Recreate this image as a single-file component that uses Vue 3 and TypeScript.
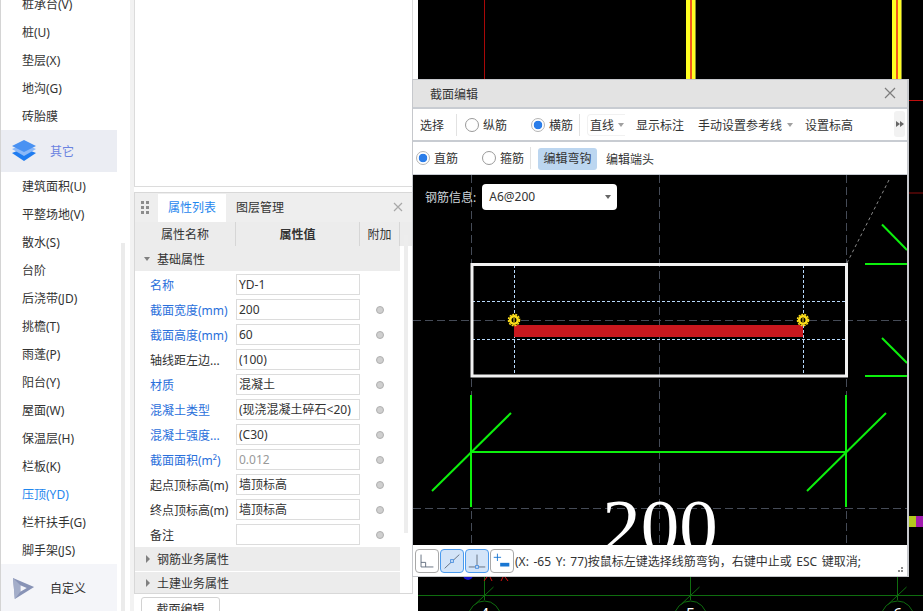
<template>
  <div class="app">
    <aside class="side">
      <ul class="side-list">
        <li
          v-for="item in sideItems"
          :key="item.label"
          :class="['side-item', { 'side-item--cat': item.icon, 'side-item--on': item.on, [`side-item--${item.icon}`]: item.icon }]"
        >
          <svg v-if="item.icon === 'layers'" class="side-icon" viewBox="0 0 24 22">
            <path d="M0 13 L5 11 L12 14 L19 11 L24 13 L12 21 Z" fill="#1f7cf0" />
            <path d="M0 9 L12 4 L24 9 L12 16 Z" fill="#8ab8f8" />
            <path d="M0 6 L12 0 L24 6 L12 12 Z" fill="#4a92f2" />
          </svg>
          <svg v-if="item.icon === 'play'" class="side-icon" viewBox="0 0 24 24">
            <path d="M0 1 L23 11 L2 24 Z M8 9 L8 16 L15 12 Z" fill="#8893b6" fill-rule="evenodd" />
            <path d="M0 1 L8 9 L8 16 L2 24 Z" fill="#a3adc9" />
          </svg>
          <span>{{ item.label }}</span>
        </li>
      </ul>
      <div class="side-thumb"></div>
    </aside>

    <section class="middle">
      <div class="blank-panel"></div>
      <div class="prop-panel">
        <header class="prop-tabs">
          <div class="grip"><i v-for="n in 6" :key="n"></i></div>
          <span class="tab tab--on">属性列表</span>
          <span class="tab">图层管理</span>
          <svg class="prop-close" viewBox="0 0 10 10"><path d="M1 1 L9 9 M9 1 L1 9" /></svg>
        </header>
        <div class="prop-row prop-head">
          <span>属性名称</span>
          <span class="prop-head-val">属性值</span>
          <span>附加</span>
        </div>
        <div class="group group--first"><i class="caret caret--down"></i>基础属性</div>
        <div v-for="row in props" :key="row.name" class="prop-row">
          <span :class="['prop-name', { 'prop-name--blue': row.blue }]">{{ row.name }}</span>
          <span :class="['prop-val', { 'prop-val--dim': row.dim }]">{{ row.value }}</span>
          <span class="prop-extra"><i v-if="row.dot" class="dot"></i></span>
        </div>
        <div class="group group--gap"><i class="caret caret--right"></i>钢筋业务属性</div>
        <div class="group group--last"><i class="caret caret--right"></i>土建业务属性</div>
        <div class="prop-scroll"></div>
      </div>
      <button class="section-btn">截面编辑</button>
    </section>

    <main class="cad">
      <svg class="cad-svg" viewBox="418 0 505 611">
        <line x1="484.5" y1="0" x2="484.5" y2="80" stroke="#a80808" />
        <g v-for="x in [686, 892]" :key="x">
          <rect :x="x" y="0" width="10" height="80" fill="#ffff22" />
          <rect :x="x + 4" y="0" width="2" height="80" fill="#f05a1e" />
          <rect :x="x + 9" y="0" width="1" height="80" fill="#8a8a30" />
        </g>
        <line x1="909" y1="100.5" x2="923" y2="100.5" stroke="#c00e0e" />
        <line x1="909" y1="193" x2="923" y2="193" stroke="#8a0c0c" />
        <rect x="908" y="516" width="8" height="11" fill="#b4c81e" />
        <rect x="916" y="516" width="7" height="11" fill="#a21caf" />
        <g fill="none" stroke="#0f6d0f">
          <line x1="418" y1="595.5" x2="923" y2="595.5" />
          <g v-for="a in axes" :key="a.label">
            <line :x1="a.x" y1="577" :x2="a.x" y2="600" />
            <line :x1="a.x - 9" y1="604" :x2="a.x + 9" y2="587" />
            <circle :cx="a.x" cy="617" r="16" />
            <text :x="a.x" y="620" class="axis-label" stroke="none">{{ a.label }}</text>
          </g>
        </g>
        <circle cx="468" cy="575" r="5" fill="#1414c8" />
        <path d="M487 577 L484 581 M490 577 L492 581 M503 577 L501 581 M505 577 L508 581" stroke="#d01010" fill="none" />
      </svg>
    </main>

    <div class="dialog">
      <div class="dlg-title">
        <span>截面编辑</span>
        <svg class="dlg-close" viewBox="0 0 12 12"><path d="M1 1 L11 11 M11 1 L1 11" /></svg>
      </div>
      <div class="bar bar--top">
        <span class="bar-text">选择</span>
        <i class="sep sep--a"></i>
        <label class="radio radio--first"><i class="radio-dot"></i>纵筋</label>
        <label class="radio radio--next"><i class="radio-dot radio-dot--on"></i>横筋</label>
        <i class="sep sep--b"></i>
        <span class="line-btn">直线<i class="caret caret--down caret--tool"></i></span>
        <span class="bar-text bar-text--mark">显示标注</span>
        <span class="bar-text bar-text--ref">手动设置参考线<i class="caret caret--down caret--ref"></i></span>
        <span class="bar-text bar-text--level">设置标高</span>
        <span class="more-btn"><i></i><i></i></span>
      </div>
      <div class="bar bar--second">
        <label class="radio"><i class="radio-dot radio-dot--on"></i>直筋</label>
        <label class="radio radio--next"><i class="radio-dot"></i>箍筋</label>
        <i class="sep sep--b"></i>
        <span class="edit-btn">编辑弯钩</span>
        <span class="bar-text bar-text--end">编辑端头</span>
      </div>
      <div class="sketch">
        <svg class="sketch-svg" viewBox="413 175 494 370">
          <g fill="none" stroke="#454b57" stroke-dasharray="8 4">
            <line x1="471.5" y1="175" x2="471.5" y2="545" />
            <line x1="659.5" y1="175" x2="659.5" y2="545" />
            <line x1="846.5" y1="175" x2="846.5" y2="545" />
            <line x1="413" y1="320.5" x2="907" y2="320.5" />
            <line x1="413" y1="508.5" x2="907" y2="508.5" />
          </g>
          <line x1="847" y1="263" x2="890" y2="178" stroke="#8a8a8a" stroke-dasharray="3 3" />
          <g stroke="#b8d8fa" stroke-dasharray="3 2" fill="none">
            <line x1="472" y1="301.5" x2="846" y2="301.5" />
            <line x1="472" y1="339.5" x2="846" y2="339.5" />
            <line x1="514.5" y1="265" x2="514.5" y2="376" />
            <line x1="803.5" y1="265" x2="803.5" y2="376" />
          </g>
          <rect x="472" y="264.5" width="374.5" height="111.5" fill="none" stroke="#f2f2f2" stroke-width="3" />
          <rect x="514" y="325" width="289" height="12" fill="#c8171e" />
          <g v-for="x in [514, 803]" :key="x">
            <circle :cx="x" cy="320" r="5.6" fill="none" stroke="#ffe01a" stroke-width="1.4" stroke-dasharray="2 1" />
            <circle :cx="x" cy="320" r="3.8" fill="#000" stroke="#ffe01a" stroke-width="2.6" />
            <rect :x="x - 0.5" y="318" width="1" height="4" fill="#ffe01a" />
          </g>
          <g stroke="#0cf00c" stroke-width="2" fill="none">
            <line x1="471" y1="395" x2="471" y2="507" />
            <line x1="432" y1="491" x2="511" y2="413" />
            <line x1="471" y1="452" x2="846" y2="452" />
            <line x1="846" y1="395" x2="846" y2="507" />
            <line x1="807" y1="491" x2="886" y2="413" />
            <line x1="882" y1="224.5" x2="907" y2="250" />
            <line x1="865" y1="264" x2="907" y2="264" />
            <line x1="882" y1="338" x2="907" y2="363" />
            <line x1="865" y1="376" x2="907" y2="376" />
          </g>
          <text x="660" y="552" class="dim-text">200</text>
        </svg>
        <div class="rebar-info">
          <span>钢筋信息:</span>
          <div class="rebar-select">A6@200<i class="caret caret--down caret--select"></i></div>
        </div>
      </div>
      <div class="status">
        <button class="snap">
          <svg viewBox="0 0 24 24"><path d="M5.5 5 V18.5 H19 M5.5 13.5 H10.5 V18.5" /></svg>
        </button>
        <button class="snap snap--on">
          <svg viewBox="0 0 24 24"><path d="M4 20 L20 5" /><rect x="10.5" y="10.5" width="3" height="3" /></svg>
        </button>
        <button class="snap snap--on">
          <svg viewBox="0 0 24 24"><path d="M3 18.5 H21 M12 5 V17" /><rect x="10.5" y="17" width="3" height="3" /></svg>
        </button>
        <button class="snap">
          <svg viewBox="0 0 24 24">
            <path class="snap-plus" d="M7 4 V12 M3 8 H11" />
            <rect class="snap-minus" x="10" y="14" width="10" height="4" />
          </svg>
        </button>
        <span class="status-text">(X: -65 Y: 77)按鼠标左键选择线筋弯钩，右键中止或 ESC 键取消;</span>
        <div class="resize"><i v-for="n in 6" :key="n"></i></div>
      </div>
    </div>
  </div>
</template>

<script setup lang="ts">
type SideItem = { label: string; icon?: 'layers' | 'play'; on?: boolean }
type PropRow = { name: string; value: string; blue?: boolean; dim?: boolean; dot: boolean }

const sideItems: SideItem[] = [
  { label: '桩承台(V)' },
  { label: '桩(U)' },
  { label: '垫层(X)' },
  { label: '地沟(G)' },
  { label: '砖胎膜' },
  { label: '其它', icon: 'layers' },
  { label: '建筑面积(U)' },
  { label: '平整场地(V)' },
  { label: '散水(S)' },
  { label: '台阶' },
  { label: '后浇带(JD)' },
  { label: '挑檐(T)' },
  { label: '雨蓬(P)' },
  { label: '阳台(Y)' },
  { label: '屋面(W)' },
  { label: '保温层(H)' },
  { label: '栏板(K)' },
  { label: '压顶(YD)', on: true },
  { label: '栏杆扶手(G)' },
  { label: '脚手架(JS)' },
  { label: '自定义', icon: 'play' },
]

const props: PropRow[] = [
  { name: '名称', value: 'YD-1', blue: true, dot: false },
  { name: '截面宽度(mm)', value: '200', blue: true, dot: true },
  { name: '截面高度(mm)', value: '60', blue: true, dot: true },
  { name: '轴线距左边...', value: '(100)', dot: true },
  { name: '材质', value: '混凝土', blue: true, dot: true },
  { name: '混凝土类型', value: '(现浇混凝土碎石<20)', blue: true, dot: true },
  { name: '混凝土强度...', value: '(C30)', blue: true, dot: true },
  { name: '截面面积(m²)', value: '0.012', blue: true, dim: true, dot: true },
  { name: '起点顶标高(m)', value: '墙顶标高', dot: true },
  { name: '终点顶标高(m)', value: '墙顶标高', dot: true },
  { name: '备注', value: '', dot: true },
]

const axes = [
  { x: 484.5, label: '4' },
  { x: 690.5, label: '5' },
  { x: 897.5, label: '6' },
]
</script>

<style>
html,
body {
  margin: 0;
  overflow: hidden;
}
</style>

<style scoped>
.app {
  position: relative;
  display: flex;
  width: 923px;
  height: 611px;
  overflow: hidden;
  background: #fff;
  color: #333;
  font: 12px "Noto Sans", "Noto Sans CJK SC", sans-serif;
}

/* ====== Sidebar ====== */
.side {
  position: relative;
  flex: none;
  width: 129px;
  height: 100%;
  overflow: hidden;
  border-left: 1px solid #d4d4d4;
  border-right: 4px solid #f2f2f2;
  background: #fff;
}

.side-list {
  width: 116px;
  margin: -10px 0 0;
  padding: 0;
  list-style: none;
}

.side-item {
  display: flex;
  align-items: center;
  height: 28px;
  padding-left: 21px;
}

.side-item--on {
  color: #1f87ee;
}

.side-item--cat {
  position: relative;
  padding-left: 49px;
}

.side-item--layers {
  height: 42px;
  background: #ebedf3;
  color: #6a83e0;
}

.side-item--play {
  height: 47px;
  background: #f4f5f9;
}

.side-icon {
  position: absolute;
  left: 11px;
  width: 24px;
  height: 22px;
}

.side-thumb {
  position: absolute;
  top: 243px;
  bottom: 0;
  left: 120px;
  width: 4px;
  background: #ebebeb;
}

/* ====== Middle column ====== */
.middle {
  position: relative;
  flex: none;
  width: 284px;
  height: 100%;
}

.blank-panel {
  width: 279px;
  height: 187px;
  box-sizing: border-box;
  border: 1px solid #dcdcdc;
  border-top: 0;
}

.prop-panel {
  position: relative;
  width: 279px;
  height: 402px;
  box-sizing: border-box;
  margin-top: 5px;
  overflow: hidden;
  border: 1px solid #d8d8d8;
}

.prop-tabs {
  position: relative;
  display: flex;
  align-items: center;
  height: 29px;
  padding-left: 23px;
  background: #eeeeee;
}

.grip {
  position: absolute;
  top: 8px;
  left: 6px;
  display: grid;
  grid-template-columns: 3px 3px;
  gap: 2px;
}

.grip i,
.resize i {
  width: 2px;
  height: 2px;
  background: #8c8c8c;
}

.grip i {
  width: 3px;
  height: 3px;
}

.tab {
  display: flex;
  align-items: center;
  justify-content: center;
  width: 68px;
  height: 28px;
  box-sizing: border-box;
  padding-bottom: 2px;
}

.tab--on {
  background: #fff;
  color: #1f87ee;
}

.prop-close {
  position: absolute;
  top: 9px;
  right: 9px;
  width: 10px;
  height: 10px;
  fill: none;
  stroke: #a8a8a8;
  stroke-width: 1.2;
}

.prop-row {
  display: grid;
  grid-template-columns: 101px 124px 40px;
  align-items: center;
  height: 25px;
}

.prop-head {
  height: 24px;
  background: #ececec;
  text-align: center;
}

.prop-head span {
  display: flex;
  align-items: center;
  justify-content: center;
  height: 100%;
  border-right: 1px solid #d6d6d6;
}

.prop-head-val {
  font-weight: 700;
}

.group {
  display: flex;
  align-items: center;
  width: 265px;
  height: 25px;
  box-sizing: border-box;
  background: #ececec;
}

.group--first {
  height: 26px;
  border-bottom: 1px solid #fff;
}

.group--gap {
  border-bottom: 1px solid #fff;
}

.group--last {
  height: 22px;
}

.caret {
  display: block;
  width: 0;
  height: 0;
}

.caret--down {
  border-top: 4px solid #808080;
  border-right: 3px solid transparent;
  border-left: 3px solid transparent;
}

.group .caret {
  margin: 0 7px 0 9px;
}

.group .caret--right {
  margin: 0 7px 0 11px;
  border-top: 4px solid transparent;
  border-bottom: 4px solid transparent;
  border-left: 4px solid #808080;
}

.prop-name {
  padding-left: 15px;
  white-space: nowrap;
}

.prop-name--blue {
  color: #2a6fdb;
}

.prop-val {
  height: 21px;
  box-sizing: border-box;
  padding-left: 2px;
  overflow: hidden;
  border: 1px solid #dcdcdc;
  line-height: 19px;
  white-space: nowrap;
}

.prop-val--dim {
  color: #999;
}

.prop-extra {
  display: flex;
  justify-content: center;
}

.dot {
  display: block;
  width: 8px;
  height: 8px;
  box-sizing: border-box;
  border: 1px solid #b0b0b0;
  border-radius: 50%;
  background: #cfcfcf;
}

.prop-scroll {
  position: absolute;
  top: 42px;
  right: 4px;
  width: 4px;
  height: 298px;
  background: #ededed;
}

.section-btn {
  display: block;
  width: 79px;
  height: 30px;
  margin: 3px 0 0 7px;
  padding: 0 0 6px;
  border: 1px solid #d2d2d2;
  border-radius: 3px;
  background: #fff;
  color: #333;
  font: inherit;
}

/* ====== CAD ====== */
.cad {
  flex: 1;
  min-width: 0;
  height: 100%;
  background: #000;
}

.cad-svg,
.sketch-svg {
  display: block;
  width: 100%;
  height: 100%;
}

.axis-label {
  fill: #fff;
  font: 16px "Noto Sans", sans-serif;
  text-anchor: middle;
}

/* ====== Dialog ====== */
.dialog {
  position: absolute;
  top: 79px;
  left: 412px;
  display: flex;
  flex-direction: column;
  width: 497px;
  height: 498px;
  box-sizing: border-box;
  border: solid #c6c8cc;
  border-width: 1px 2px 1px 1px;
  background: #c8ccd2;
}

.dlg-title {
  position: relative;
  flex: none;
  height: 27px;
  padding-left: 17px;
  background: #e3e3e3;
  font-size: 12px;
  line-height: 29px;
}

.dlg-close {
  position: absolute;
  top: 7px;
  right: 11px;
  width: 12px;
  height: 12px;
  fill: none;
  stroke: #7d7d7d;
  stroke-width: 1.2;
}

.bar {
  display: flex;
  flex: none;
  align-items: center;
  background: #fff;
}

.bar--top {
  position: relative;
  height: 31px;
  margin-top: 2px;
  padding-left: 7px;
}

.bar--second {
  height: 32px;
  margin-top: 2px;
  margin-bottom: 1px;
  padding-left: 3px;
}

.bar-text {
  display: flex;
  align-items: center;
  white-space: nowrap;
}

.bar-text--mark {
  margin-left: 11px;
}

.bar-text--ref {
  margin-left: 14px;
}

.bar-text--level {
  margin-left: 12px;
}

.bar-text--end {
  margin-left: 9px;
  padding-top: 2px;
}

.sep {
  flex: none;
  width: 1px;
  height: 22px;
  background: #e2e2e2;
}

.sep--a {
  margin-left: 12px;
}

.sep--b {
  margin-left: 6px;
}

.radio {
  display: flex;
  align-items: center;
  gap: 4px;
}

.radio--first {
  margin-left: 8px;
}

.radio--next {
  margin-left: 24px;
}

.radio-dot {
  display: block;
  width: 14px;
  height: 14px;
  box-sizing: border-box;
  border: 1px solid #9a9a9a;
  border-radius: 50%;
  background: #fff;
}

.radio-dot--on {
  border-color: #b4b4b4;
  background: radial-gradient(circle, #2b7de9 0 4px, #fff 4.6px);
}

.line-btn {
  display: flex;
  flex: none;
  align-items: center;
  width: 38px;
  height: 22px;
  box-sizing: border-box;
  margin-left: 7px;
  padding-left: 2px;
  border: 1px solid #f1f1f1;
  border-right: 0;
  border-radius: 4px 0 0 4px;
  white-space: nowrap;
}

.caret--tool {
  margin-left: 4px;
  border-top-color: #a0a0a0;
}

.caret--ref {
  margin-left: 5px;
  border-top-color: #a0a0a0;
}

.more-btn {
  position: absolute;
  top: 2px;
  right: 2px;
  display: flex;
  align-items: center;
  justify-content: center;
  width: 11px;
  height: 26px;
  border-radius: 3px;
  background: #f2f2f2;
}

.more-btn i {
  width: 0;
  height: 0;
  border-top: 3px solid transparent;
  border-bottom: 3px solid transparent;
  border-left: 4px solid #666;
}

.edit-btn {
  width: 59px;
  height: 22px;
  margin-top: 2px;
  margin-left: 7px;
  border-radius: 3px;
  background: #bcd6f0;
  line-height: 22px;
  text-align: center;
}

.sketch {
  position: relative;
  flex: none;
  height: 370px;
  overflow: hidden;
  background: #000;
}

.rebar-info {
  position: absolute;
  top: 9px;
  left: 12px;
  display: flex;
  align-items: center;
  gap: 6px;
  color: #cfd6dc;
}

.rebar-select {
  position: relative;
  width: 135px;
  height: 26px;
  box-sizing: border-box;
  padding-left: 7px;
  border-radius: 4px;
  background: #fff;
  color: #333;
  line-height: 26px;
}

.caret--select {
  position: absolute;
  top: 11px;
  right: 6px;
  border-top-color: #666;
}

.dim-text {
  fill: #fff;
  font: 77px "Liberation Serif", serif;
  text-anchor: middle;
}

.status {
  position: relative;
  display: flex;
  flex: 1;
  align-items: center;
  gap: 1px;
  padding-left: 2px;
  background: #fff;
}

.snap {
  flex: none;
  width: 24px;
  height: 24px;
  box-sizing: border-box;
  padding: 0;
  border: 1px solid #a8a8a8;
  border-radius: 4px;
  background: #fff;
}

.snap svg {
  display: block;
  width: 22px;
  height: 22px;
  fill: none;
  stroke: #5f6b7c;
}

.snap--on {
  border-color: #4a9bef;
  background: #d3e4f8;
}

.snap--on rect {
  fill: #d3e4f8;
  stroke: #4a8fe0;
}

.snap-plus {
  stroke: #1976d2;
}

.snap .snap-minus {
  fill: #1976d2;
  stroke: none;
}

.status-text {
  word-spacing: 1.5px;
  white-space: nowrap;
}

.resize {
  position: absolute;
  right: 4px;
  bottom: 4px;
  display: grid;
  grid-template-columns: repeat(3, 2px);
  gap: 1px;
}

.resize i:nth-child(1),
.resize i:nth-child(2),
.resize i:nth-child(4) {
  visibility: hidden;
}
</style>
